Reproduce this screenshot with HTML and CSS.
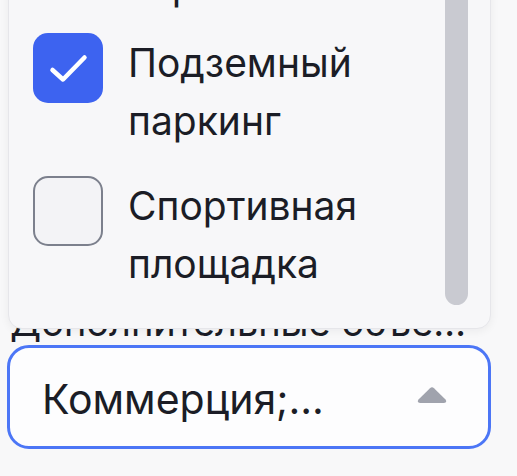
FILE: index.html
```html
<!DOCTYPE html>
<html lang="ru">
<head>
<meta charset="utf-8">
<link rel="stylesheet" href="styles.css">
</head>
<body>
<div class="page">
  <div class="field">
    <div class="label">Дополнительные объекты инфраструктуры</div>
    <div class="select">
      <span class="select-value">Коммерция;...</span>
      <svg class="caret" width="32" height="18" viewBox="0 0 32 18"><path d="M14 2.2 Q16 0.5 18 2.2 L29.5 13.5 Q31.5 16.5 28 17 L4 17 Q0.5 16.5 2.5 13.5 Z" fill="#a0a3ad"/></svg>
    </div>
    <div class="dropdown">
      <div class="list">
        <div class="item item-prev">
          <span class="box"></span>
          <span class="text">Круглосуточная охрана</span>
        </div>
        <div class="item">
          <span class="box checked">
            <svg width="70" height="70" viewBox="0 0 70 70"><path d="M19.5 37 L30 46.5 L51.5 24.5" fill="none" stroke="#fff" stroke-width="4.5" stroke-linecap="round" stroke-linejoin="round"/></svg>
          </span>
          <span class="text">Подземный паркинг</span>
        </div>
        <div class="item">
          <span class="box"></span>
          <span class="text">Спортивная площадка</span>
        </div>
      </div>
      <div class="scrollbar"></div>
    </div>
  </div>
</div>
</body>
</html>
```

FILE: styles.css
```css
* { box-sizing: border-box; }

html, body {
  margin: 0;
  padding: 0;
  background: #f8f8f9;
  font-family: Inter, "Noto Sans", "Liberation Sans", sans-serif;
  color: #1b1d26;
}

.page {
  width: 517px;
  height: 476px;
  overflow: hidden;
  padding: 299px 26px 0 7px;
}

.field {
  position: relative;
  width: 484px;
}

.label {
  font-size: 38px;
  line-height: 46px;
  height: 46px;
  padding: 0 14px 0 3px;
  white-space: nowrap;
  overflow: hidden;
  text-overflow: ellipsis;
}

.select {
  height: 104px;
  border: 3px solid #4c76f6;
  border-radius: 22px;
  background: #fdfdfe;
  display: flex;
  align-items: center;
  justify-content: space-between;
  padding: 4px 40px 0 32px;
}

.select-value {
  font-size: 41px;
  line-height: 48px;
}

.caret {
  display: block;
  margin-top: -9px;
}

.dropdown {
  position: absolute;
  left: 1px;
  right: 0;
  bottom: 120px;
  height: 349px;
  background: #f7f7f9;
  border: 1px solid #e6e6ea;
  border-radius: 14px;
  box-shadow: 0 2px 10px rgba(20, 24, 40, 0.06);
  overflow: hidden;
}

.list {
  margin-top: -83px;
  padding-left: 24px;
  display: flex;
  flex-direction: column;
  gap: 26px;
}

.item {
  display: flex;
  align-items: flex-start;
  gap: 25px;
}

.item-prev {
  margin-bottom: -8px;
}

.box {
  flex: none;
  width: 70px;
  height: 70px;
  border-radius: 15px;
  border: 2.5px solid #7c808d;
  background: #f3f3f6;
}

.box.checked {
  border: none;
  background: #3d63f0;
}

.box svg { display: block; }

.text {
  width: 300px;
  font-size: 39px;
  line-height: 58px;
  padding-top: 1px;
}

.scrollbar {
  position: absolute;
  top: -20px;
  right: 22px;
  bottom: 23px;
  width: 23px;
  border-radius: 12px;
  background: #c9cad1;
}
```
